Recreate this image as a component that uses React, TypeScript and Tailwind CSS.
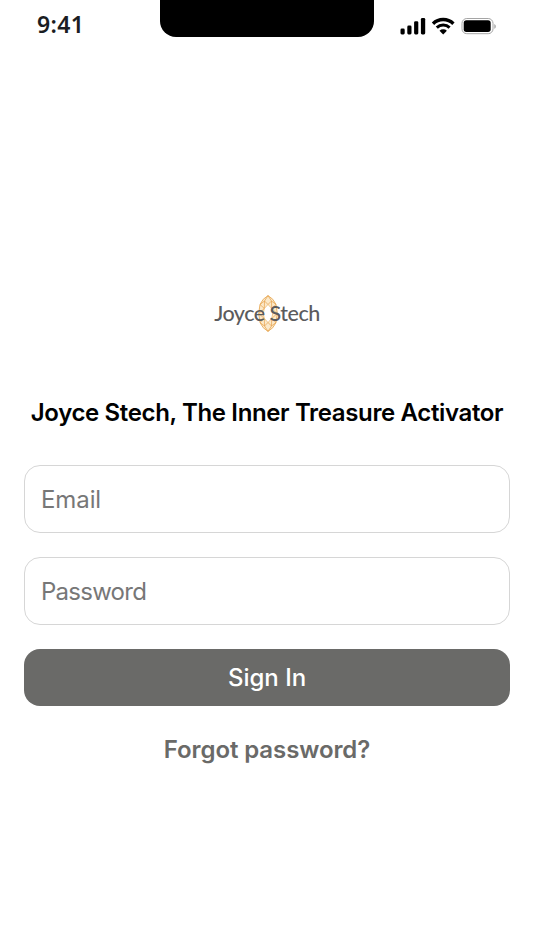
import { useState } from "react";

interface FieldProps {
  type: "email" | "password";
  label: string;
  className: string;
}

function StatusBar() {
  return (
    <header className="relative flex h-[52px] items-start justify-between pl-[37px] pr-[38px]">
      <span className="pt-[9px] font-['Noto_Sans',sans-serif] text-[23px] leading-[30px] font-semibold tracking-[0.35px] text-[#1b1d22]">
        9:41
      </span>

      {/* Notch */}
      <div className="absolute left-[160px] top-0 h-[36.5px] w-[214px] rounded-b-2xl bg-black" />

      <div className="pt-[17px]">
        <svg className="h-[18px] w-[96px]" viewBox="0 0 96 18" fill="none">
          {/* Signal */}
          <rect x="0.5" y="11.6" width="4.2" height="5.8" rx="1.3" fill="#000" />
          <rect x="7.3" y="8.6" width="4.2" height="8.8" rx="1.3" fill="#000" />
          <rect x="14.1" y="4.2" width="4.2" height="13.2" rx="1.3" fill="#000" />
          <rect x="20.9" y="1" width="4.3" height="16.4" rx="1.3" fill="#000" />

          {/* Wifi */}
          <path d="M33 6.7a14.6 14.6 0 0 1 20.4 0" stroke="#000" strokeWidth="3.4" />
          <path d="M36.8 10.6a9.1 9.1 0 0 1 12.8 0" stroke="#000" strokeWidth="3" />
          <path d="M39.5 13.7a5.5 5.5 0 0 1 7.4 0L43.2 17.4z" fill="#000" />

          {/* Battery */}
          <rect x="62" y="1.5" width="31" height="15.2" rx="4.8" stroke="#a5a5a5" />
          <rect x="63.7" y="3.3" width="27" height="11.6" rx="2.7" fill="#000" />
          <path d="M94.3 7v4.8c.9-.4 1.5-1.3 1.5-2.4S95.2 7.4 94.3 7z" fill="#a5a5a5" />
        </svg>
      </div>
    </header>
  );
}

function Logo() {
  return (
    <div className="relative flex h-[40px] w-[110px] items-center justify-center">
      {/* Faceted gem behind the name */}
      <svg className="absolute left-[45px] top-[1px] h-[37px] w-[22px]" viewBox="0 0 22 37" fill="none" strokeLinejoin="round">
        <path
          fillRule="evenodd"
          d="M11 .6Q5.5 3.5 3 9.5.4 18.5 3 27.5 5.5 33.5 11 36.4 16.5 33.5 19 27.5 21.6 18.5 19 9.5 16.5 3.5 11 .6zM11 9.5 7.3 13.5 6.3 18.5 7.3 23.5 11 27.5 14.7 23.5 15.7 18.5 14.7 13.5z"
          fill="#fbe9ca"
        />
        <path
          d="M11 .6Q5.500 3.500 3 9.500.4 18.500 3 27.500 5.500 33.500 11 36.400 16.500 33.500 19 27.500 21.600 18.500 19 9.500 16.500 3.500 11 .6z"
          stroke="#e8ab5a"
          strokeWidth=".9"
        />
        <path d="M11 9.5 7.3 13.5l-1 5 1 5 3.7 4 3.7-4 1-5-1-5z" stroke="#ecb468" strokeWidth=".7" />
        <path
          d="M11 .6 7.5 6 11 9.5 14.5 6zM3 9.5 7.5 6l-.2 7.5zM19 9.5 14.5 6l.2 7.5zM1.800 18.5l5.500-5M1.800 18.5l5.500 5M20.200 18.5l-5.500-5M20.200 18.5l-5.500 5M3 27.5l4.300-4 .2 7.5zM19 27.5l-4.300-4-.2 7.5zM11 36.400 7.500 31l3.500-3.500 3.500 3.500z"
          stroke="#e6a04a"
          strokeWidth=".7"
        />
      </svg>
      <span className="relative -top-px whitespace-nowrap font-['Lato',sans-serif] text-[21.5px] leading-[28px] font-medium tracking-[-0.5px] text-[#5b5b5d]">
        Joyce Stech
      </span>
    </div>
  );
}

function Field({ type, label, className }: FieldProps) {
  const [value, setValue] = useState("");

  return (
    <input
      type={type}
      value={value}
      placeholder={label}
      aria-label={label}
      onChange={(e) => setValue(e.target.value)}
      className={`h-[68px] w-full rounded-2xl border border-[#d6d6d6] bg-white px-4 text-2xl text-black outline-none placeholder:text-[#777777] ${className}`}
    />
  );
}

export default function App() {
  return (
    <div className="flex h-[950px] w-[534px] flex-col overflow-hidden bg-white font-['Inter',sans-serif]">
      <StatusBar />

      <main className="flex flex-col items-center px-6 pt-[242px]">
        <Logo />

        <h1 className="mt-[63px] whitespace-nowrap text-2xl leading-8 font-semibold tracking-[-0.36px] text-black">
          Joyce Stech, The Inner Treasure Activator
        </h1>

        <form className="mt-[36px] flex w-full flex-col gap-6" onSubmit={(e) => e.preventDefault()}>
          <Field type="email" label="Email" className="tracking-[-0.1px]" />
          <Field type="password" label="Password" className="tracking-[-0.75px]" />
          <button
            type="submit"
            className="h-[57px] w-full rounded-2xl bg-[#6a6a68] pt-px text-2xl font-medium text-white"
          >
            Sign In
          </button>
        </form>

        <button type="button" className="mt-[28px] text-2xl font-semibold tracking-[-0.1px] text-[#6a6a68]">
          Forgot password?
        </button>
      </main>
    </div>
  );
}
